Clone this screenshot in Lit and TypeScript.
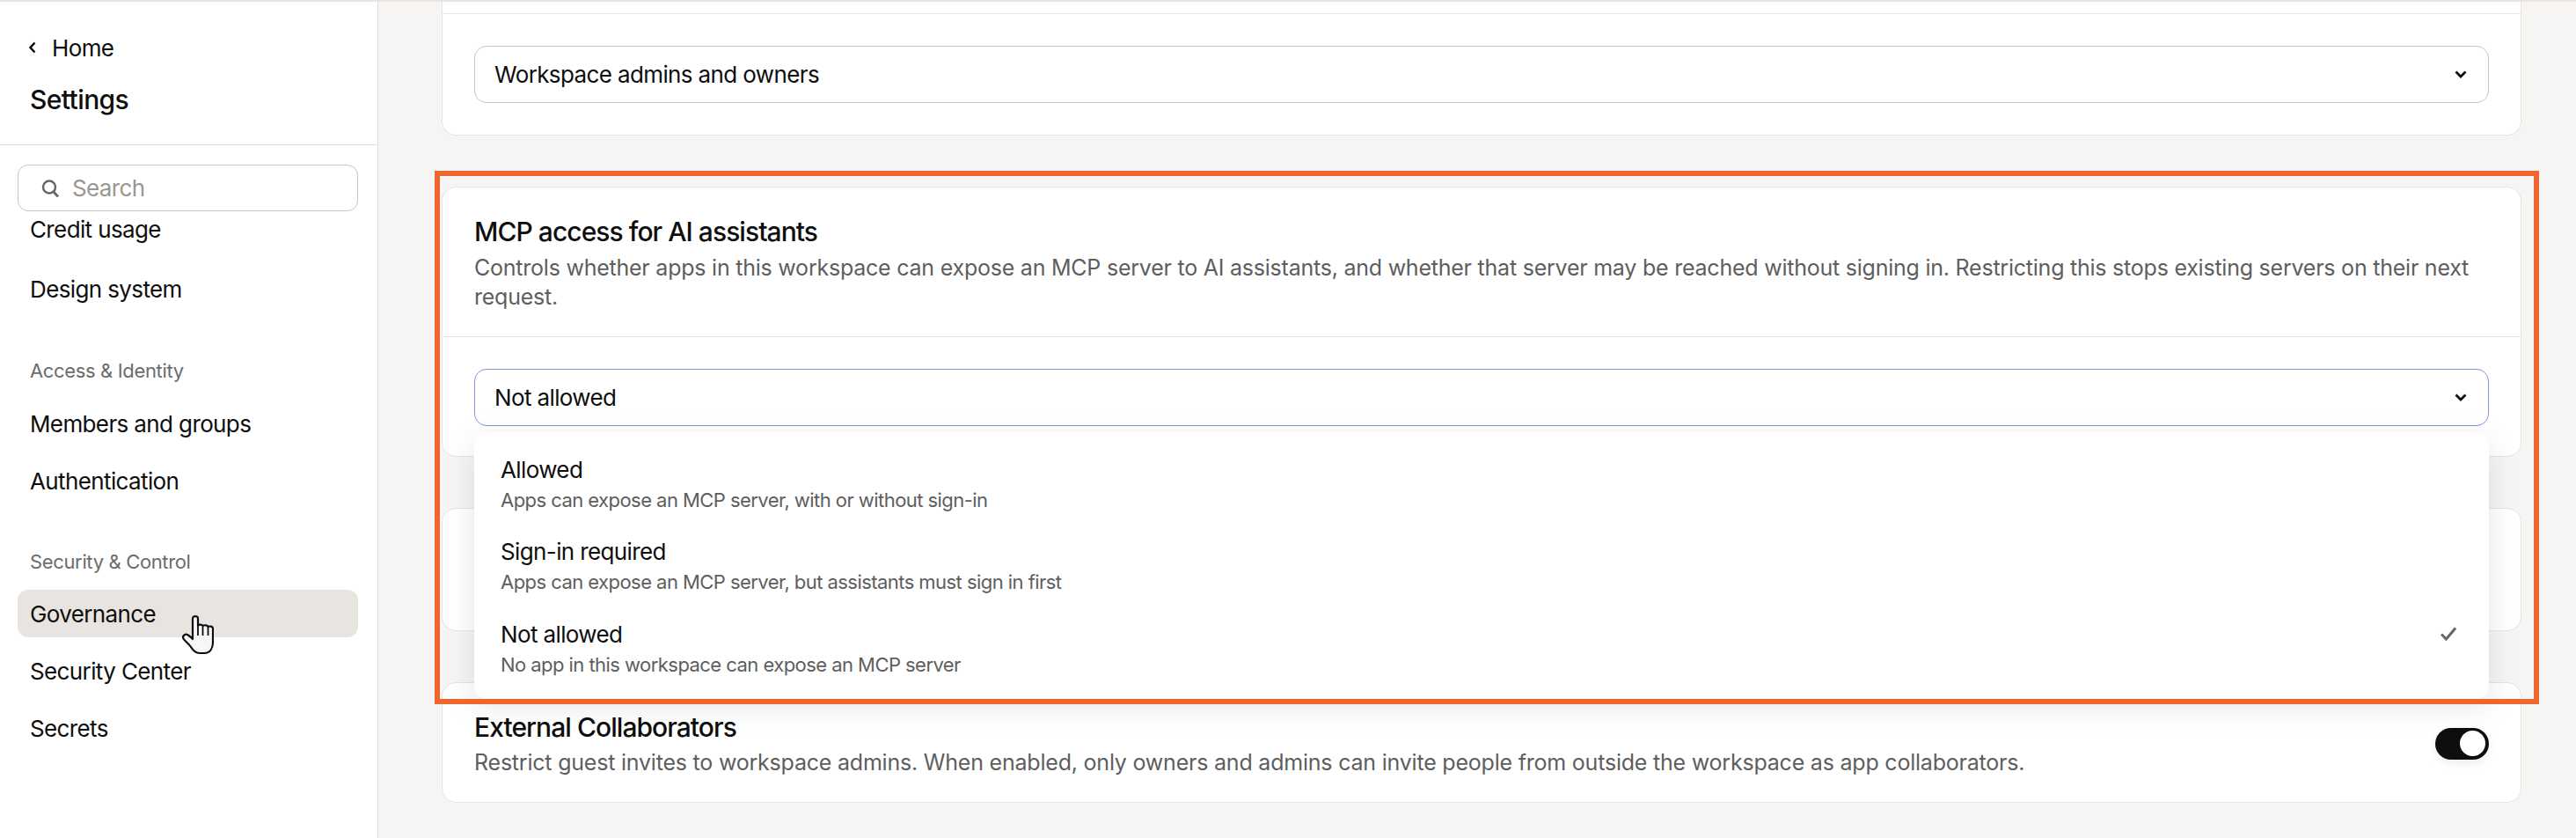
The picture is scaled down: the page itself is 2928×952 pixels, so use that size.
import { LitElement, html, css, svg } from "lit";
import { customElement } from "lit/decorators.js";

const chevronDown = html`<svg class="chev" viewBox="0 0 14 9" fill="none"><path d="M1.5 1.5 7 7l5.500-5.500" stroke="#0e0e0e" stroke-width="2.800"/></svg>`;

const hand = svg`<path d="M12 24V3.500C12 .3 18 .3 18 3.500v8c1.200-1.300 5-1.200 5.500.5 1.500-1.200 5.500-1 6 1 1.500-1 5.500-.5 5.500 2v15c0 7-3 13-10 13h-5c-5 0-7-3-10-7-2-3-7-7-8.500-9.500C0 24 3 20.500 6 22c2 1 4 3 6 5Z" fill="#f7f7f7" stroke="#0e0e0e" stroke-width="2.200" stroke-linejoin="round"/><path d="M18 11.500V23M23.500 12V23M29.500 13V23" fill="none" stroke="#0e0e0e" stroke-width="1.800"/>`;

@customElement("app-root")
export class AppRoot extends LitElement {
  static styles = css`
    :host {
      display: block;
      width: 2928px;
      height: 952px;
      overflow: hidden;
      background: #f6f5f3;
      color: #0e0e0e;
      font-family: Inter, "Liberation Sans", sans-serif;
      font-size: 26px;
      letter-spacing: -0.62px;
      position: relative;
    }
    .strip { height: 2px; background: #e8e4e0; }
    .page { display: flex; height: 950px; }

    aside {
      width: 429px;
      flex: none;
      background: #fff;
      border-right: 1px solid #e0deda;
      overflow: hidden;
    }
    .head { padding: 34px 0 31px 34px; border-bottom: 1px solid #e0deda; }
    .home { display: flex; align-items: center; gap: 18px; height: 36px; margin-left: -1px; }
    .home svg { width: 8px; height: 14px; }
    .settings { font-size: 30px; font-weight: 500; line-height: 40px; margin-top: 21px; letter-spacing: -0.6px; }
    .search {
      position: relative;
      z-index: 1;
      margin: 22px 22px 0 20px;
      height: 53px;
      box-sizing: border-box;
      border: 1px solid #c9c4bd;
      border-radius: 12px;
      background: #fff;
      display: flex;
      align-items: center;
      padding-left: 26px;
      gap: 15px;
      color: #9a9690;
    }
    .search svg { width: 20px; height: 20px; }
    .list { display: flex; flex-direction: column; margin: -7px 22px 0 20px; position: relative; }
    .row { height: 54px; display: flex; align-items: center; padding-left: 14px; border-radius: 12px; }
    .row + .row { margin-top: 11px; }
    .row.active { background: #e8e5e0; }
    .row.design { margin-top: 14px; }
    .label { font-size: 22px; line-height: 30px; color: #6c6c6c; padding-left: 14px; letter-spacing: -0.35px; }
    .label.first { margin-top: 51px; margin-bottom: 18px; }
    .label.second { margin-top: 50px; margin-bottom: 17px; }

    main {
      flex: 1;
      min-width: 0;
      padding: 0 62px 0 72px;
      display: flex;
      flex-direction: column;
      gap: 58px;
    }
    .card {
      background: #fff;
      border: 1px solid #e8e5e0;
      border-radius: 16px;
      box-sizing: border-box;
    }
    .card.clipped { border-top: none; border-radius: 0 0 16px 16px; padding-top: 13px; }
    .card.mcp { position: relative; z-index: 2; }
    .card.spacer { height: 140px; }
    .card.toggle-card {
      display: flex;
      align-items: center;
      justify-content: space-between;
      padding: 30px 36px 28px;
    }
    .card-head { padding: 30px 36px 28px; border-bottom: 1px solid #e8e5e0; }
    .rule { border-top: 1px solid #e8e5e0; }
    h2 { margin: 0; font-size: 30px; line-height: 40px; font-weight: 500; letter-spacing: -0.95px; }
    .desc { margin: 5px 0 0; font-size: 25px; line-height: 33px; color: #5e5e5e; letter-spacing: -0.23px; }
    .toggle-card .desc { margin-top: 4px; letter-spacing: -0.21px; }
    .body { padding: 36px; }
    .mcp .body { padding-bottom: 34px; }
    .select {
      position: relative;
      height: 65px;
      box-sizing: border-box;
      border: 1px solid #c8c3bc;
      border-radius: 14px;
      display: flex;
      align-items: center;
      justify-content: space-between;
      padding: 0 24px 0 22px;
      background: #fff;
    }
    .select.open { border-color: #8093e8; }
    .chev { width: 14px; height: 9px; }
    .menu {
      position: absolute;
      top: 71px;
      left: -1px;
      right: -1px;
      height: 304px;
      box-sizing: border-box;
      background: #fff;
      border-radius: 16px;
      box-shadow: 0 8px 36px rgba(0, 0, 0, 0.1);
      padding-top: 12px;
    }
    .opt {
      height: 93.500px;
      box-sizing: border-box;
      padding: 2px 37px 0 30px;
      display: flex;
      align-items: center;
      justify-content: space-between;
    }
    .opt-t { line-height: 34px; margin-bottom: 1px; }
    .opt-d { font-size: 22px; line-height: 33px; color: #5e5e5e; letter-spacing: -0.55px; }
    .check { width: 18px; height: 16px; align-self: flex-start; margin-top: 20px; }
    .toggle {
      width: 61px;
      height: 36px;
      flex: none;
      box-sizing: border-box;
      border-radius: 18px;
      background: #0e0e0e;
      display: flex;
      justify-content: flex-end;
      align-items: center;
      padding-right: 4px;
      box-shadow: 0 4px 10px rgba(0, 0, 0, 0.08);
    }
    .knob { width: 29px; height: 29px; border-radius: 50%; background: #fff; }

    .annotation {
      position: absolute;
      left: 494px;
      top: 194px;
      width: 2392px;
      height: 606px;
      box-sizing: border-box;
      border: 6px solid #ee652d;
      z-index: 3;
      pointer-events: none;
    }
    .cursor { position: absolute; left: 207px; top: 699px; width: 36px; height: 45px; z-index: 4; }
  `;

  private options = [
    { t: "Allowed", d: "Apps can expose an MCP server, with or without sign-in" },
    { t: "Sign-in required", d: "Apps can expose an MCP server, but assistants must sign in first" },
    { t: "Not allowed", d: "No app in this workspace can expose an MCP server", on: true },
  ];

  render() {
    return html`
      <div class="strip"></div>
      <div class="page">
        <aside>
          <div class="head">
            <div class="home">
              <svg viewBox="0 0 8 14" fill="none"><path d="M6.500 1.500 1.500 7l5 5.500" stroke="#0e0e0e" stroke-width="2.500"/></svg>
              <span>Home</span>
            </div>
            <div class="settings">Settings</div>
          </div>
          <div class="search">
            <svg viewBox="0 0 20 20" fill="none"><circle cx="9" cy="8.500" r="7" stroke="#666" stroke-width="2.500"/><path d="m14 14 5 5.500" stroke="#666" stroke-width="2.800"/></svg>
            <span>Search</span>
          </div>
          <div class="list">
            <div class="row">Credit usage</div>
            <div class="row design">Design system</div>
            <div class="label first">Access &amp; Identity</div>
            <div class="row">Members and groups</div>
            <div class="row">Authentication</div>
            <div class="label second">Security &amp; Control</div>
            <div class="row active">Governance</div>
            <div class="row">Security Center</div>
            <div class="row">Secrets</div>
          </div>
        </aside>
        <main>
          <section class="card clipped">
            <div class="rule"></div>
            <div class="body">
              <div class="select"><span>Workspace admins and owners</span>${chevronDown}</div>
            </div>
          </section>
          <section class="card mcp">
            <div class="card-head">
              <h2>MCP access for AI assistants</h2>
              <p class="desc">Controls whether apps in this workspace can expose an MCP server to AI assistants, and whether that server may be reached without signing in. Restricting this stops existing servers on their next request.</p>
            </div>
            <div class="body">
              <div class="select open">
                <span>Not allowed</span>${chevronDown}
                <div class="menu">
                  ${this.options.map(
                    (o) => html`<div class="opt">
                      <div><div class="opt-t">${o.t}</div><div class="opt-d">${o.d}</div></div>
                      ${o.on
                        ? html`<svg class="check" viewBox="0 0 18 16" fill="none"><path d="M1 8.500 6.500 14 17 1.500" stroke="#666" stroke-width="3"/></svg>`
                        : ""}
                    </div>`
                  )}
                </div>
              </div>
            </div>
          </section>
          <section class="card spacer"></section>
          <section class="card toggle-card">
            <div>
              <h2>External Collaborators</h2>
              <p class="desc">Restrict guest invites to workspace admins. When enabled, only owners and admins can invite people from outside the workspace as app collaborators.</p>
            </div>
            <div class="toggle"><div class="knob"></div></div>
          </section>
        </main>
      </div>
      <div class="annotation"></div>
      <svg class="cursor" viewBox="0 0 36 45">${hand}</svg>
    `;
  }
}
